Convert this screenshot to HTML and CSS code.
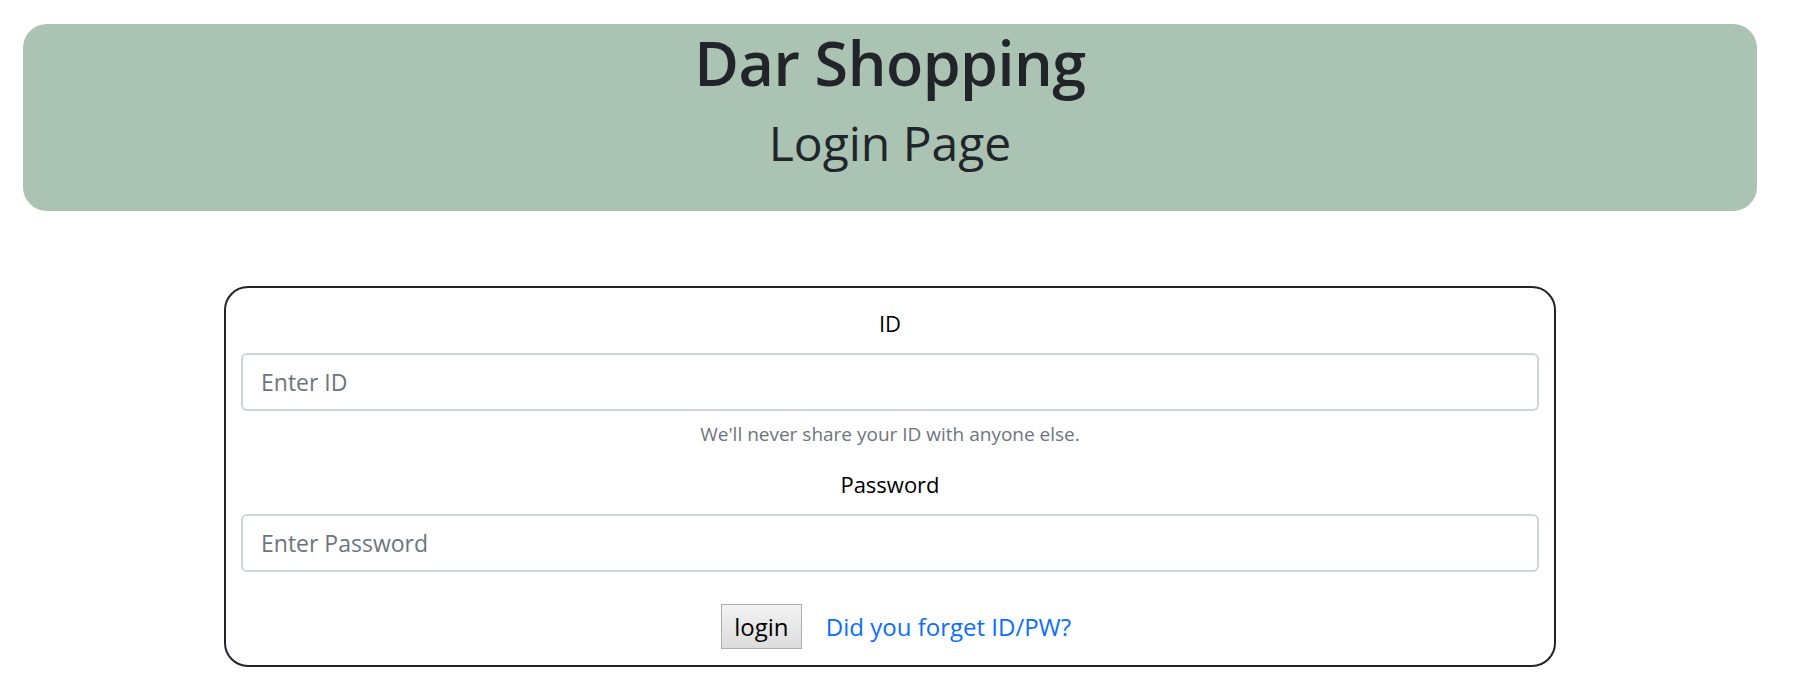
FILE: index.html
```html
<!DOCTYPE html>
<html lang="en">
<head>
<meta charset="utf-8">
<title>Dar Shopping - Login</title>
<link rel="stylesheet" href="styles.css">
</head>
<body>
<div class="page">
  <header class="hero">
    <h1 class="hero-title">Dar Shopping</h1>
    <h2 class="hero-sub">Login Page</h2>
  </header>
  <form class="login-card">
    <div class="field">
      <label class="field-label" for="uid">ID</label>
      <input class="field-input" id="uid" type="text" placeholder="Enter ID">
      <div class="field-help">We'll never share your ID with anyone else.</div>
    </div>
    <div class="field">
      <label class="field-label" for="upw">Password</label>
      <input class="field-input" id="upw" type="password" placeholder="Enter Password">
    </div>
    <div class="actions">
      <button class="login-btn" type="button">login</button>
      <a class="forgot-link" href="#">Did you forget ID/PW?</a>
    </div>
  </form>
</div>
</body>
</html>
```
FILE: styles.css
```css
* { box-sizing: border-box; }
html, body { margin: 0; padding: 0; background: #fff; }
body {
  font-family: "Open Sans", "Noto Sans", sans-serif;
  color: #212529;
}
.page {
  width: 1780px;
  padding-top: 24px;
}
.hero {
  margin: 0 23px;
  height: 187px;
  background: #aac3b3;
  border-radius: 24px;
  text-align: center;
  display: flex;
  flex-direction: column;
  align-items: center;
}
.hero-title {
  margin: 0;
  font-size: 61px;
  font-weight: 600;
  line-height: 78px;
  letter-spacing: -0.5px;
}
.hero-sub {
  margin: 8px 0 0;
  font-size: 48px;
  font-weight: 400;
  line-height: 66px;
}
.login-card {
  margin: 75px 224px 0;
  border: 2px solid #212529;
  border-radius: 24px;
  padding: 17px 15px 15px;
  height: 381px;
}
.field {
  display: flex;
  flex-direction: column;
}
.field-label {
  text-align: center;
  font-size: 22px;
  line-height: 36px;
  color: #000;
  margin-bottom: 12px;
}
.field-input {
  height: 58px;
  border: 2px solid #ced4da;
  border-radius: 6px;
  padding: 0 18px;
  font-family: inherit;
  font-size: 23px;
  color: #212529;
  outline: none;
}
.field-input::placeholder { color: #6c757d; }
.field-help {
  text-align: center;
  margin-top: 8px;
  margin-bottom: 16px;
  font-size: 19px;
  line-height: 31px;
  color: #6c757d;
}
.actions {
  margin-top: 32px;
  padding-left: 12px;
  display: flex;
  justify-content: center;
  align-items: center;
  gap: 24px;
}
.login-btn {
  height: 45px;
  width: 81px;
  padding: 0;
  font-family: inherit;
  font-size: 24px;
  color: #000;
  background: linear-gradient(#f3f3f3, #dcdcdc);
  border: 1px solid #adadad;
  border-radius: 0;
}
.forgot-link {
  font-size: 24px;
  color: #0d6efd;
  text-decoration: none;
}
```
